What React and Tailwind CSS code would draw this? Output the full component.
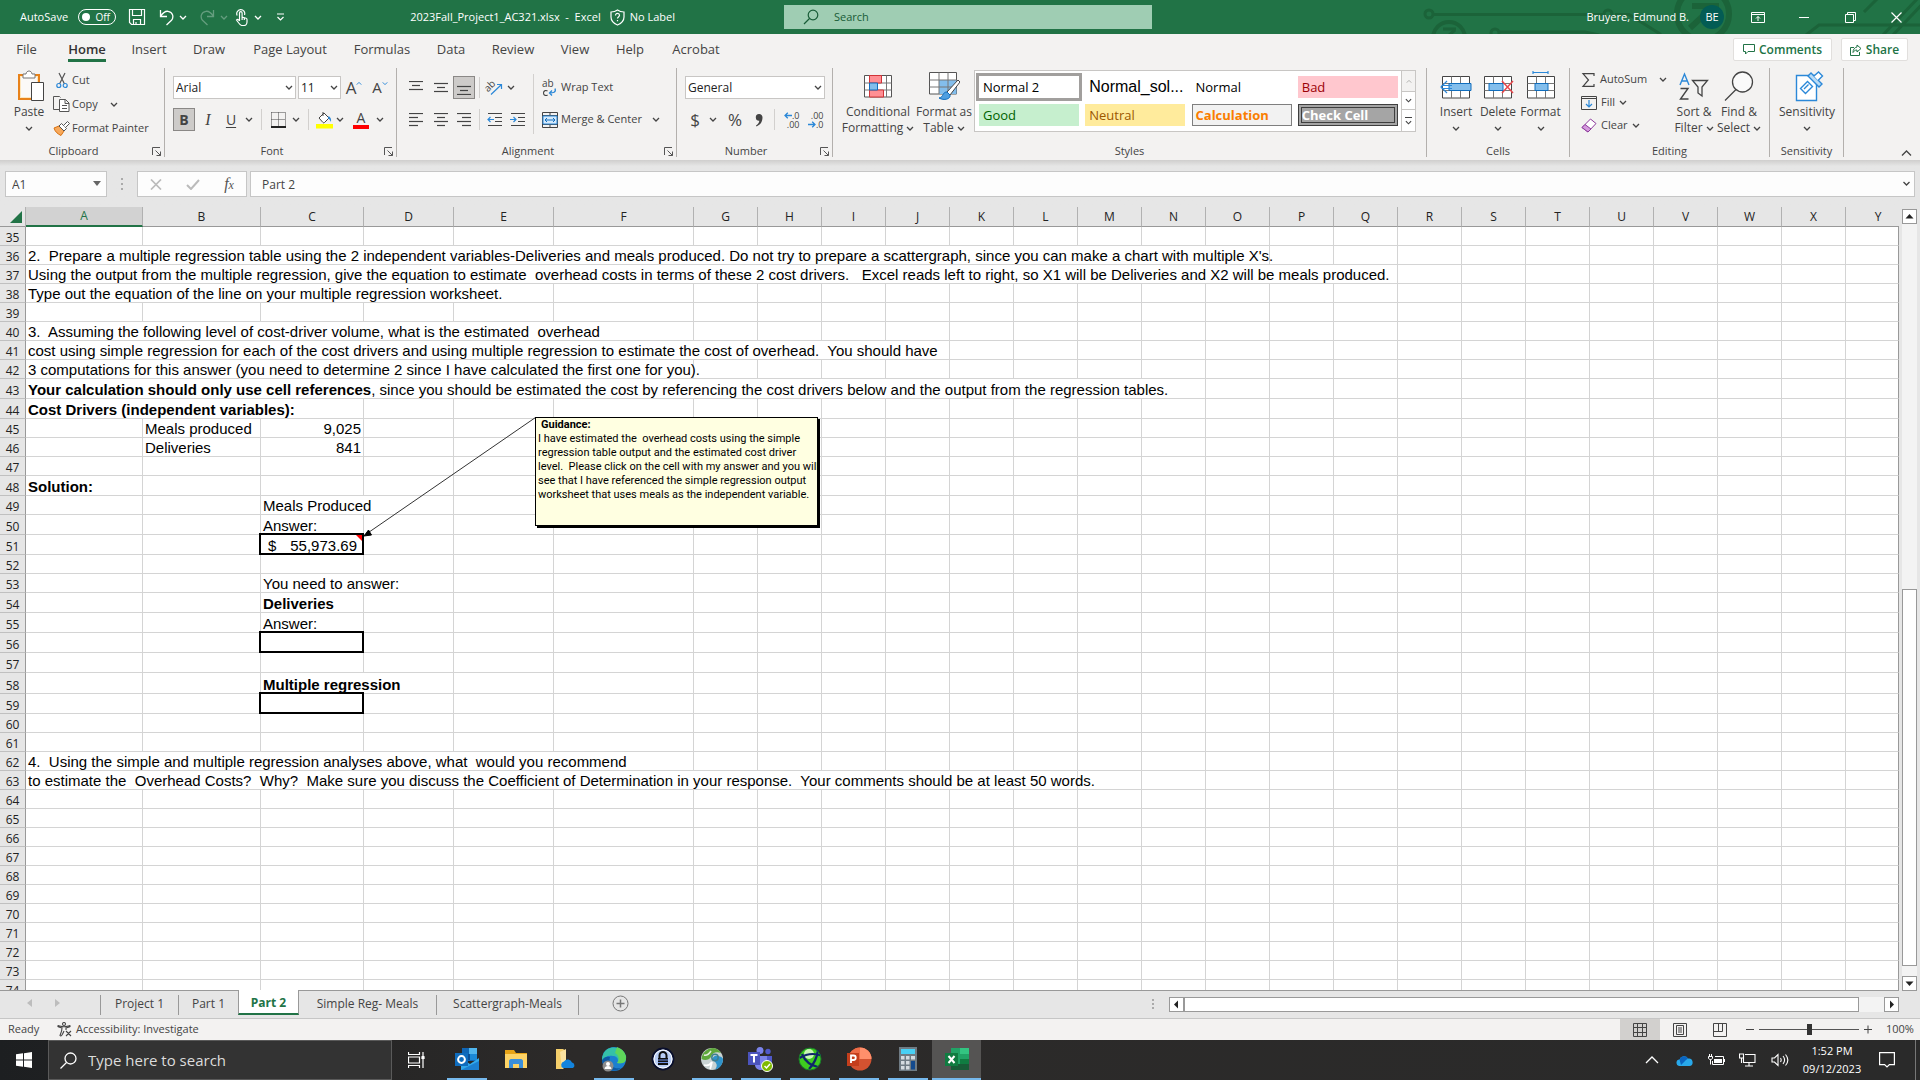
import React from "react";

const UI = "font-['Open_Sans','Noto_Sans',sans-serif]";
const SHEET = "font-['Liberation_Sans',Arial,sans-serif]";

/* ---------- small shared pieces ---------- */

function Caret({ className = "text-[#444]", w = 8 }) {
  return (
    <svg width={w} height="5" viewBox="0 0 8 5" fill="none" className={className}>
      <path d="M1 1l3 3 3-3" stroke="currentColor" strokeWidth="1.3" />
    </svg>
  );
}

function Btn({ label, className = "", children }) {
  return (
    <button
      type="button"
      aria-label={label}
      className={"flex h-[23px] shrink-0 items-center justify-center whitespace-nowrap " + className}
    >
      {children}
    </button>
  );
}

function Sep({ className = "w-[9px]" }) {
  return (
    <span className={"flex h-[21px] shrink-0 justify-center " + className}>
      <span className="w-px bg-[#d2d0ce]" />
    </span>
  );
}

function Launcher() {
  return (
    <svg width="10" height="10" viewBox="0 0 10 10" fill="none" stroke="#555" strokeWidth="1">
      <path d="M.5 8V.5H8M3.500 3.500l5 5M8.500 4.500v4h-4" />
    </svg>
  );
}

function Group({ name, width, launcher, children }) {
  return (
    <section aria-label={name} className={"flex h-[89px] shrink-0 flex-col border-r border-[#b3b0ad] " + width}>
      <div className="flex h-[77px] w-full shrink-0">{children}</div>
      <div className={"relative flex h-[12px] shrink-0 items-center justify-center text-[11px] leading-[16px] text-[#444] " + (launcher ? "pr-[17px]" : "")}>
        <span>{name}</span>
        {launcher && (
          <button type="button" aria-label={name + " settings"} className="absolute right-[2px] top-[2px]">
            <Launcher />
          </button>
        )}
      </div>
    </section>
  );
}

function BigButton({ icon, lines, caretBelow, className }) {
  return (
    <button type="button" className={"flex shrink-0 flex-col items-center text-[12px] leading-[16px] text-[#444] " + className}>
      <span className="flex h-[36px] items-center justify-center">{icon}</span>
      {lines.map((l, i) => (
        <span key={l} className="flex items-center gap-[3px] whitespace-nowrap">
          {l}
          {!caretBelow && i === lines.length - 1 && <Caret />}
        </span>
      ))}
      {caretBelow && (
        <span className="flex h-[16px] items-center">
          <Caret />
        </span>
      )}
    </button>
  );
}

function Combo({ label, value, className }) {
  return (
    <span className={"relative block h-[23px] shrink-0 " + className}>
      <select
        aria-label={label}
        defaultValue={value}
        className="h-full w-full appearance-none border border-[#c8c6c4] bg-white px-[2px] text-[12px] text-[#222] outline-none"
      >
        <option>{value}</option>
      </select>
      <span className="pointer-events-none absolute right-[3px] top-[9px]">
        <Caret />
      </span>
    </span>
  );
}

/* ---------- title bar ---------- */

function TitleBar() {
  return (
    <header className="relative flex h-[34px] shrink-0 items-center bg-[#217346] text-[11px] text-white">
      <svg className="absolute right-0 top-0" width="500" height="34" viewBox="1420 0 500 34" fill="none" stroke="#1b6339" strokeWidth="3">
        <circle cx="1429" cy="14" r="4" />
        <path d="M1434 14.500h170M1615 14.500h14l32 20M1500 32h85l14 3" />
        <circle cx="1608" cy="14" r="4" />
        <circle cx="1449" cy="38" r="16" strokeWidth="4" />
        <path d="M1441 42l14-12M1443 29h13" />
        <circle cx="1495" cy="33" r="4" />
        <circle cx="1703" cy="14" r="26" strokeWidth="6" />
        <path d="M1690 28l24-22M1692 6h24v18" strokeWidth="6" />
        <path d="M1806 35l13-10h101M1882 36l36-38M1892 36l36-38M1864 12l14-14" />
      </svg>
      <div className="relative flex w-[300px] shrink-0 items-center pl-[20px]">
        <label className="flex items-center">
          <span className="w-[58px]">AutoSave</span>
          <span className="relative h-[16px] w-[38px]">
            <input type="checkbox" role="switch" className="absolute inset-0 h-full w-full appearance-none rounded-full border border-white" />
            <span className="pointer-events-none absolute left-[4px] top-[4px] h-[8px] w-[8px] rounded-full bg-white" />
            <span className="pointer-events-none absolute right-[6px] top-0 text-[10px] leading-[16px]">Off</span>
          </span>
        </label>
        <button type="button" aria-label="Save" className="ml-[12px] w-[18px]">
          <svg width="18" height="18" viewBox="0 0 18 18" fill="none" stroke="white" strokeWidth="1.200">
            <path d="M1.500 1.500h15v15h-13l-2-2zM4.500 1.500v6h9v-6M5.500 16.500v-5h7v5M8 16v-2" />
          </svg>
        </button>
        <button type="button" aria-label="Undo" className="ml-[13px] w-[15px]">
          <svg width="15" height="17" viewBox="0 0 15 17" fill="none" stroke="white" strokeWidth="1.300">
            <path d="M1.500 1v6.500H8M1.500 7.500C4 3.500 6 2 9 2.300c5 .6 6 6 3.500 9L7.500 16" />
          </svg>
        </button>
        <Caret className="ml-[5px] text-white" />
        <button type="button" aria-label="Redo" className="ml-[13px] w-[15px] opacity-30">
          <svg width="15" height="17" viewBox="0 0 15 17" fill="none" stroke="white" strokeWidth="1.300">
            <path d="M13.500 1v6.500H7M13.500 7.500C11 3.500 9 2 6 2.300c-5 .6-6 6-3.500 9L7.500 16" />
          </svg>
        </button>
        <Caret className="ml-[5px] text-white opacity-30" />
        <button type="button" aria-label="Touch mode" className="ml-[7px] w-[13px]">
          <svg width="13" height="18" viewBox="0 0 13 18" fill="none" stroke="white" strokeWidth="1.200">
            <path d="M4.500 13V5a1.300 1.300 0 0 1 2.600 0v4l4 1.200c.6.200.900.7.900 1.300V14c0 2-1.500 3.500-3 3.500H7C5 17.500 3 14 1.500 12c.8-1 2-.6 3 1M2.200 7.500A4 4 0 1 1 9.500 7M7.100 9v3M9.300 9.800V12" />
          </svg>
        </button>
        <Caret className="ml-[6px] text-white" />
        <button type="button" aria-label="Customize quick access" className="ml-[14px]">
          <svg width="9" height="8" viewBox="0 0 9 8" fill="none" stroke="white" strokeWidth="1.200">
            <path d="M1 1h7M1.500 4l3 3 3-3" />
          </svg>
        </button>
      </div>
      <div className="relative flex w-[484px] shrink-0 items-center justify-end pr-[109px]">
        <span className="whitespace-pre">2023Fall_Project1_AC321.xlsx  -  Excel</span>
        <svg className="ml-[9px]" width="15" height="17" viewBox="0 0 15 17" fill="none" stroke="white" strokeWidth="1.200">
          <path d="M7.500 1c2 1.500 4 2 6.500 2v5c0 4-3 6.500-6.500 8C4 14.500 1 12 1 8V3c2.500 0 4.500-.5 6.500-2z" />
          <path d="M5.500 6.500c0-3 4-2.500 4-.2 0 1.700-2 1.600-2 3.200M7.500 11v1.200" />
        </svg>
        <span className="ml-[5px]">No Label</span>
      </div>
      <label className="relative flex h-[24px] w-[368px] shrink-0 items-center bg-[#9fcdb3] text-[#185c37]">
        <svg className="ml-[19px]" width="16" height="16" viewBox="0 0 16 16" fill="none" stroke="#185c37" strokeWidth="1.200">
          <circle cx="10" cy="6" r="4.800" />
          <path d="M6.500 9.500L1 15" />
        </svg>
        <input aria-label="Search" placeholder="Search" className="ml-[15px] w-[280px] bg-transparent text-[11px] outline-none placeholder:text-[#185c37]" />
      </label>
      <div className="relative ml-auto flex shrink-0 items-center">
        <span>Bruyere, Edmund B.</span>
        <span className="ml-[11px] flex h-[24px] w-[24px] items-center justify-center rounded-full bg-[#035c54] text-[11px]">BE</span>
        <button type="button" aria-label="Ribbon display options" className="ml-[27px]">
          <svg width="14" height="11" viewBox="0 0 14 11" fill="none" stroke="white">
            <path d="M.5.500h13v10H.5zM.5 2.500h13M7 9V4.500M5 6.500l2-2 2 2" />
          </svg>
        </button>
        <button type="button" aria-label="Minimize" className="ml-[34px] h-[10px] w-[10px]">
          <span className="block h-px w-full bg-white" />
        </button>
        <button type="button" aria-label="Restore" className="ml-[36px]">
          <svg width="11" height="11" viewBox="0 0 11 11" fill="none" stroke="white">
            <path d="M.5 2.500h8v8h-8zM2.500 2.500v-2h8v8h-2" />
          </svg>
        </button>
        <button type="button" aria-label="Close" className="ml-[35px] mr-[18px]">
          <svg width="11" height="11" viewBox="0 0 11 11" fill="none" stroke="white" strokeWidth="1.200">
            <path d="M.5.500l10 10M10.500.500l-10 10" />
          </svg>
        </button>
      </div>
    </header>
  );
}

/* ---------- ribbon tabs ---------- */

const TABS = [
  ["File", "w-[53px]"],
  ["Home", "w-[68px]"],
  ["Insert", "w-[56px]"],
  ["Draw", "w-[64px]"],
  ["Page Layout", "w-[98px]"],
  ["Formulas", "w-[86px]"],
  ["Data", "w-[52px]"],
  ["Review", "w-[72px]"],
  ["View", "w-[52px]"],
  ["Help", "w-[58px]"],
  ["Acrobat", "w-[74px]"],
];

function RibbonTabs() {
  return (
    <div className="flex h-[34px] shrink-0 bg-[#f3f2f1] text-[13px] text-[#444]">
      <nav className="flex">
        {TABS.map(([t, w]) => (
          <button
            key={t}
            type="button"
            className={"flex items-start justify-center whitespace-nowrap pt-[6px] leading-[19px] " + w + (t === "Home" ? " font-semibold text-[#333]" : "")}
          >
            <span className={t === "Home" ? "border-b-[3px] border-[#217346]" : ""}>{t}</span>
          </button>
        ))}
      </nav>
      <div className="ml-auto mr-[12px] flex gap-[9px] pt-[4px] font-semibold text-[#217346]">
        <button type="button" className="flex h-[23px] w-[99px] items-center justify-center gap-[4px] rounded-[2px] border border-[#e1dfdd] bg-white text-[12px]">
          <svg width="12" height="11" viewBox="0 0 12 11" fill="none" stroke="#217346">
            <path d="M.5.500h11v7H5L2.500 10V7.500h-2z" />
          </svg>
          Comments
        </button>
        <button type="button" className="flex h-[23px] w-[67px] items-center justify-center gap-[4px] rounded-[2px] border border-[#e1dfdd] bg-white text-[12px]">
          <svg width="12" height="12" viewBox="0 0 12 12" fill="none" stroke="#217346">
            <path d="M4 3.500H.5v8h9V8M7 1l4 3.500L7 8V6C5 6 4 7 3 8.500 3 5.500 4.500 3.500 7 3z" />
          </svg>
          Share
        </button>
      </div>
    </div>
  );
}

/* ---------- ribbon icons ---------- */

const PasteIcon = () => (
  <svg width="28" height="32" viewBox="0 0 28 32" fill="none">
    <path d="M2 5h20v24H2z" fill="#fde6bd" stroke="#e8821a" strokeWidth="2" />
    <path d="M4 7h16v20H4z" fill="#fbf9f7" />
    <path d="M6 8V4h3c.5-4 5.500-4 6 0h3v4z" fill="#fff" stroke="#777" />
    <path d="M14.500 12.500h12v18h-12z" fill="#fff" stroke="#444" />
  </svg>
);
const CutIcon = () => (
  <svg width="12" height="17" viewBox="0 0 12 17" fill="none">
    <path d="M3 1l5.500 11M9 1L3.500 12" stroke="#555" strokeWidth="1.200" />
    <circle cx="2.800" cy="13.500" r="2" stroke="#2b88d8" strokeWidth="1.200" />
    <circle cx="9.200" cy="13.500" r="2" stroke="#2b88d8" strokeWidth="1.200" />
  </svg>
);
const CopyIcon = () => (
  <svg width="17" height="16" viewBox="0 0 17 16" fill="none" stroke="#555">
    <path d="M6 13.500H.500v-13h6l1 1" />
    <path d="M6.500 3.500h6l3.500 3.500v8.500H6.500zM12 3.500V7.500h4M9 9.500h5M9 12.500h5" fill="#fff" />
  </svg>
);
const PainterIcon = () => (
  <svg width="17" height="15" viewBox="0 0 17 15" fill="none">
    <path d="M1 7l5-2 5 5-3 4.500C5 13 2 11 1 7z" fill="#f7a95c" stroke="#d8700f" />
    <path d="M6 5l2.500-2.500 5 5L11 10z" fill="#fff" stroke="#555" />
    <path d="M10.500 4.500l4-4 2 2-4 4" fill="#fff" stroke="#555" />
  </svg>
);
const Lines = ({ rows, top = 2 }) => (
  <svg width="14" height="14" viewBox="0 0 14 14" stroke="#444" strokeWidth="1.200">
    {rows.map(([a, b], i) => (
      <path key={i} d={`M${a} ${top + i * 4}.5H${b}`} />
    ))}
  </svg>
);
const BorderIcon = () => (
  <svg width="15" height="16" viewBox="0 0 15 16" fill="none" stroke="#444">
    <path d="M.5.500h14M.5.500v14M14.500.500v14M7.500.500v14M.5 7.500h14" strokeDasharray="1 1" />
    <path d="M0 15h15" strokeWidth="2" stroke="#222" />
  </svg>
);
const FillIcon = () => (
  <svg width="17" height="18" viewBox="0 0 17 18" fill="none">
    <path d="M3 7l5-5 5 5-4.500 4.500a1 1 0 0 1-1.500 0z" stroke="#444" fill="#fff" />
    <path d="M7 5V1" stroke="#444" />
    <path d="M12.500 5c2 1 3 3 2.500 6-1-2-1.500-3-3-3.500z" fill="#2b88d8" />
    <path d="M0 13h17v4.500H0z" fill="#ffff00" />
  </svg>
);
const OrientIcon = () => (
  <svg className="overflow-visible" width="17" height="17" viewBox="0 0 17 17" fill="none">
    <text x="0" y="11" fontSize="10" fill="#444" transform="rotate(-45 4 10)">ab</text>
    <path d="M5 15.500L15 6M11 5.500h4.500V10" stroke="#2b88d8" strokeWidth="1.200" />
  </svg>
);
const IndentIcon = ({ right }) => (
  <svg width="15" height="14" viewBox="0 0 15 14" fill="none">
    <path d="M1 .500h14M8 4.500h7M8 8.500h7M1 12.500h14" stroke="#444" strokeWidth="1.200" />
    <path d={right ? "M0 6.500h6M3.500 4l2.500 2.500L3.500 9" : "M7 6.500H1M3.500 4L1 6.500 3.500 9"} stroke="#2b88d8" strokeWidth="1.200" />
  </svg>
);
const WrapIcon = () => (
  <svg className="overflow-visible" width="15" height="18" viewBox="0 0 15 18" fill="none">
    <text fill="#444" fontSize="10" x="0" y="8">ab</text>
    <path d="M5.500 12.200c-1-1.200-4-1-4 1.800s3 3 4 1.800" stroke="#444" strokeWidth="1.100" />
    <path d="M13 9.500c1.500 4-2 4.500-5.500 4.500M10 11.500L7.500 14l2.500 2.500" stroke="#2b88d8" strokeWidth="1.300" />
  </svg>
);
const MergeIcon = () => (
  <svg width="16" height="16" viewBox="0 0 16 16" fill="none">
    <path d="M.5.500h15v15H.5zM8 .500v3M8 12.500v3M.5 12.500h15M.5 3.500h15" stroke="#444" />
    <path d="M1 4h14v8H1z" fill="#d6eafb" stroke="#2b88d8" />
    <path d="M3 8h10M5 6L3 8l2 2M11 6l2 2-2 2" stroke="#106ebe" />
  </svg>
);
const DecimalIcon = ({ less }) => (
  <span className="flex h-[18px] w-[17px] flex-col text-right text-[9px] leading-[9px] text-[#444]">
    <span className="flex items-center justify-end">
      {!less && (
        <svg width="8" height="7" viewBox="0 0 8 7" fill="none" stroke="#2b88d8" strokeWidth="1.300"><path d="M8 3.500H1M3.800.700L1 3.500l2.800 2.800" /></svg>
      )}
      {less ? ".00" : ".0"}
    </span>
    <span className="flex items-center justify-end">
      {less && (
        <svg width="8" height="7" viewBox="0 0 8 7" fill="none" stroke="#2b88d8" strokeWidth="1.300"><path d="M0 3.500h7M4.200.700L7 3.500 4.200 6.300" /></svg>
      )}
      {less ? ".0" : ".00"}
    </span>
  </span>
);
const CondIcon = () => (
  <svg width="28" height="23" viewBox="0 0 28 23" fill="none">
    <path d="M.5.500h27v21.500H.5z" fill="#fff" stroke="#555" />
    <path d="M5.500.500V22M22.500.500V22M.5 8h27M.5 15h27" stroke="#777" />
    <path d="M5.500.500h12V8h-12zM5.500 15h14v7h-14z" fill="#ff8f94" stroke="#d13438" />
    <path d="M5.500 8h8v7h-8z" fill="#83beec" stroke="#106ebe" />
  </svg>
);
const TableIcon = () => (
  <svg width="31" height="28" viewBox="0 0 31 28" fill="none">
    <path d="M.5.500h27v21.500H.5z" fill="#fff" stroke="#555" />
    <path d="M10 8h17.500v14H10z" fill="#83beec" />
    <path d="M10 .500V22M19 .500V22M.5 8h27M.5 15h27" stroke="#777" />
    <path d="M29 8L18 20l3 3L31 10z" fill="#fff" stroke="#444" />
    <path d="M18 20c-5 0-3 5-8 6 5 3 12 1 11-3z" fill="#4f9fe0" stroke="#106ebe" />
  </svg>
);
const CellIcon = ({ kind }) => (
  <svg width="34" height="30" viewBox="0 0 34 30" fill="none">
    <path d="M3.500 5.500h27v21.500h-27z" fill="#fff" stroke="#444" />
    <path d="M12.500 5.500V27M21.500 5.500V27M3.500 12.500h27M3.500 19.500h27" stroke="#777" />
    {kind === "insert" && (
      <>
        <path d="M10 12.500h22v7H10z" fill="#83beec" stroke="#106ebe" />
        <path d="M8 10l-6 6 6 6M2.500 14.500H13M2.500 17.500H13" stroke="#2b88d8" strokeWidth="1.200" />
      </>
    )}
    {kind === "delete" && (
      <>
        <path d="M8 12.500h14v7H8z" fill="#83beec" stroke="#106ebe" />
        <path d="M21 10l11 12M32 10L21 22" stroke="#e8474c" strokeWidth="1.500" />
      </>
    )}
    {kind === "format" && (
      <>
        <path d="M11 12.500h13v7H11z" fill="#83beec" stroke="#106ebe" />
        <path d="M9 1.500h15M9 0v3M24 0v3" stroke="#2b88d8" strokeWidth="1.200" />
      </>
    )}
  </svg>
);
const SortIcon = () => (
  <svg width="30" height="28" viewBox="0 0 30 28" fill="none">
    <path d="M1 13L5.500 2l4.500 11M2.500 9h6" stroke="#2b88d8" strokeWidth="1.400" />
    <path d="M1.500 16.500H9L1.500 27H9.500" stroke="#444" strokeWidth="1.400" />
    <path d="M13.500 8.500h15l-5.500 6.500v9l-4-3v-6z" stroke="#444" strokeWidth="1.300" />
  </svg>
);
const FindIcon = () => (
  <svg width="30" height="30" viewBox="0 0 30 30" fill="none" stroke="#444" strokeWidth="1.300">
    <circle cx="18.500" cy="11" r="10" fill="#fafafa" />
    <path d="M12 18.500L1 29.500" />
  </svg>
);
const SensIcon = () => (
  <svg width="30" height="31" viewBox="0 0 30 31" fill="none" stroke="#2b88d8" strokeWidth="1.400">
    <path d="M1.500 4.500h20v25h-20z" fill="#fff" />
    <path d="M5.500 17.500l7-7 5 5-7 7zM9 18l4.500-4.500" fill="#fff" />
    <path d="M13 5l3-3 11 11-3 3z" fill="#b9dbf5" />
    <path d="M19 5l4.500-4 4 4-4.500 4.500" fill="#fff" />
  </svg>
);

/* ---------- ribbon ---------- */

function StyleCell({ className, children }) {
  return (
    <button type="button" className={"h-[22px] w-[100px] overflow-hidden whitespace-nowrap pl-[4px] text-left text-[13px] leading-[20px] " + className}>
      {children}
    </button>
  );
}

function Ribbon() {
  return (
    <div className="flex h-[92px] shrink-0 bg-[#f3f2f1] text-[12px] text-[#444]">
      <Group name="Clipboard" width="w-[165px]" launcher>
        <BigButton className="ml-[9px] w-[40px]" icon={<span className="pl-[4px]"><PasteIcon /></span>} lines={["Paste"]} caretBelow />
        <div className="ml-[4px] flex flex-col text-[11px]">
          <Btn className="h-[24px] justify-start! gap-[2px]">
            <span className="flex w-[17px] justify-center"><CutIcon /></span>Cut
          </Btn>
          <div className="flex">
            <Btn className="h-[24px] justify-start! gap-[2px]">
              <CopyIcon />Copy
            </Btn>
            <Btn label="Copy options" className="ml-[6px] h-[24px] w-[20px]"><Caret /></Btn>
          </div>
          <Btn className="h-[24px] justify-start! gap-[2px]">
            <PainterIcon />Format Painter
          </Btn>
        </div>
      </Group>

      <Group name="Font" width="w-[232px]" launcher>
        <div className="flex flex-col pl-[8px]">
          <div className="flex h-[31px] items-center pt-[8px]">
            <Combo label="Font" value="Arial" className="w-[123px]" />
            <Combo label="Font size" value="11" className="ml-[2px] w-[43px]" />
            <Btn label="Increase font size" className="w-[26px] text-[17px]">A<Caret className="mb-[8px] rotate-180 text-[#2b88d8]" w={6} /></Btn>
            <Btn label="Decrease font size" className="w-[26px] text-[15px]">A<Caret className="mb-[8px] text-[#2b88d8]" w={6} /></Btn>
          </div>
          <div className="mt-[9px] flex h-[23px] items-center">
            <Btn label="Bold" className="w-[22px] border border-[#8a8886] bg-[#cdcbc9] text-[14px] font-bold">B</Btn>
            <Btn label="Italic" className="w-[26px] font-['Liberation_Serif',serif] text-[16px] italic">I</Btn>
            <Btn label="Underline" className="w-[20px] text-[14px] underline underline-offset-2">U</Btn>
            <Btn label="Underline options" className="w-[16px]"><Caret /></Btn>
            <Sep />
            <Btn label="Borders" className="w-[24px]"><BorderIcon /></Btn>
            <Btn label="Border options" className="w-[12px]"><Caret /></Btn>
            <Sep className="w-[12px]" />
            <Btn label="Fill color" className="w-[20px]"><FillIcon /></Btn>
            <Btn label="Fill options" className="w-[12px]"><Caret /></Btn>
            <Btn label="Font color" className="w-[30px] flex-col text-[14px] leading-[14px]">
              A<span className="h-[4px] w-[16px] bg-[#f00]" />
            </Btn>
            <Btn label="Font color options" className="w-[8px]"><Caret /></Btn>
          </div>
        </div>
      </Group>

      <Group name="Alignment" width="w-[280px]" launcher>
        <div className="flex w-[136px] flex-col pl-[6px]">
          <div className="flex h-[31px] items-center pt-[8px]">
            <Btn label="Top align" className="w-[25px]"><Lines rows={[[0, 14], [3, 11], [0, 14]]} top={0} /></Btn>
            <Btn label="Middle align" className="w-[25px]"><Lines rows={[[0, 14], [3, 11], [0, 14]]} /></Btn>
            <Btn label="Bottom align" className="w-[22px] border border-[#8a8886] bg-[#cdcbc9]"><Lines rows={[[0, 14], [3, 11], [0, 14]]} top={5} /></Btn>
            <Sep />
            <Btn label="Orientation" className="w-[20px]"><OrientIcon /></Btn>
            <Btn label="Orientation options" className="w-[14px]"><Caret /></Btn>
          </div>
          <div className="mt-[9px] flex h-[23px] items-center">
            <Btn label="Align left" className="w-[25px]"><Lines rows={[[0, 14], [0, 9], [0, 14], [0, 9]]} top={0} /></Btn>
            <Btn label="Center" className="w-[25px]"><Lines rows={[[0, 14], [3, 11], [0, 14], [3, 11]]} top={0} /></Btn>
            <Btn label="Align right" className="w-[22px]"><Lines rows={[[0, 14], [5, 14], [0, 14], [5, 14]]} top={0} /></Btn>
            <Sep />
            <Btn label="Decrease indent" className="w-[20px]"><IndentIcon /></Btn>
            <Btn label="Increase indent" className="w-[26px]"><IndentIcon right /></Btn>
          </div>
        </div>
        <span className="mt-[6px] h-[60px] w-px bg-[#d2d0ce]" />
        <div className="flex flex-col pl-[8px]">
          <div className="flex h-[31px] items-center pt-[8px]">
            <Btn className="gap-[4px] text-[11px]"><WrapIcon />Wrap Text</Btn>
          </div>
          <div className="mt-[9px] flex h-[23px] items-center">
            <Btn className="gap-[3px] text-[11px]"><MergeIcon />Merge &amp; Center</Btn>
            <Btn label="Merge options" className="ml-[6px] w-[16px]"><Caret /></Btn>
          </div>
        </div>
      </Group>

      <Group name="Number" width="w-[156px]" launcher>
        <div className="flex flex-col pl-[8px]">
          <div className="flex h-[31px] items-center pt-[8px]">
            <Combo label="Number format" value="General" className="w-[140px]" />
          </div>
          <div className="mt-[9px] flex h-[23px] items-center">
            <Btn label="Currency" className="w-[20px] text-[17px]">$</Btn>
            <Btn label="Currency options" className="w-[16px]"><Caret /></Btn>
            <Btn label="Percent" className="w-[28px] text-[17px]">%</Btn>
            <Btn label="Comma style" className="w-[20px]">
              <svg width="8" height="14" viewBox="0 0 8 14" fill="#444">
                <path d="M4 1a3.300 3.300 0 0 1 3.500 3.500C7.500 9 5 12 1.500 13.500l-.5-1C3 11 4.300 9.500 4.300 7.700A3.300 3.300 0 1 1 4 1z" />
              </svg>
            </Btn>
            <Sep className="w-[10px]" />
            <Btn label="Increase decimal" className="w-[24px]"><DecimalIcon /></Btn>
            <Btn label="Decrease decimal" className="w-[24px]"><DecimalIcon less /></Btn>
          </div>
        </div>
      </Group>

      <Group name="Styles" width="w-[594px]">
        <BigButton className="ml-[8px] w-[74px]" icon={<CondIcon />} lines={["Conditional", "Formatting"]} />
        <BigButton className="w-[58px]" icon={<TableIcon />} lines={["Format as", "Table"]} />
        <div className="ml-px mt-[2px] flex h-[62px] w-[442px] border border-[#c8c6c4] bg-white">
          <div className="grid w-[426px] grid-cols-4 content-start gap-x-[6px] gap-y-[6px] pl-[4px] pr-[3px] pt-[5px]">
            <StyleCell className="text-black outline-3 outline-[#a19f9d]">Normal 2</StyleCell>
            <StyleCell className={"text-[16px]! text-black " + SHEET}>Normal_sol...</StyleCell>
            <StyleCell className="text-black">Normal</StyleCell>
            <StyleCell className="bg-[#ffc7ce] text-[#9c0006]">Bad</StyleCell>
            <StyleCell className="bg-[#c6efce] text-[#006100]">Good</StyleCell>
            <StyleCell className="bg-[#ffeb9c] text-[#9c5700]">Neutral</StyleCell>
            <StyleCell className="border border-[#7f7f7f] bg-[#f2f2f2] pl-[3px]! leading-[18px]! font-bold text-[#fa7d00]">Calculation</StyleCell>
            <StyleCell className="border-4 border-double border-[#3f3f3f] bg-[#a5a5a5] pl-0! font-bold leading-[13px]! text-white">Check Cell</StyleCell>
          </div>
          <div className="flex w-[14px] flex-col border-l border-[#c8c6c4] bg-[#f3f2f1]">
            <button type="button" aria-label="Previous styles" className="flex h-[20px] items-center justify-center"><Caret className="rotate-180 text-[#b0aeac]" w={6} /></button>
            <button type="button" aria-label="Next styles" className="flex h-[19px] items-center justify-center border-y border-[#c8c6c4] bg-white"><Caret w={7} /></button>
            <button type="button" aria-label="More styles" className="flex h-[21px] flex-col items-center justify-center gap-[2px] bg-white">
              <span className="h-px w-[7px] bg-[#444]" /><Caret w={7} />
            </button>
          </div>
        </div>
      </Group>

      <Group name="Cells" width="w-[143px]">
        <BigButton className="ml-[8px] w-[42px]" icon={<CellIcon kind="insert" />} lines={["Insert"]} caretBelow />
        <BigButton className="w-[42px]" icon={<CellIcon kind="delete" />} lines={["Delete"]} caretBelow />
        <BigButton className="w-[43px]" icon={<CellIcon kind="format" />} lines={["Format"]} caretBelow />
      </Group>

      <Group name="Editing" width="w-[200px]">
        <div className="ml-[11px] flex w-[92px] flex-col text-[11px]">
          <div className="flex items-center">
            <Btn className="gap-[4px]">
              <svg width="15" height="14" viewBox="0 0 15 14" fill="none" stroke="#444" strokeWidth="1.200">
                <path d="M13 3V.600H2L7.500 7 2 13.400h11V11" />
              </svg>
              AutoSum
            </Btn>
            <Btn label="AutoSum options" className="ml-[8px] w-[16px]"><Caret /></Btn>
          </div>
          <Btn className="w-max gap-[4px]">
            <svg width="16" height="14" viewBox="0 0 16 14" fill="none">
              <path d="M.5.500h15v13H.5zM.5 2.500h15" stroke="#444" />
              <path d="M8 4v7M5 8l3 3 3-3" stroke="#2b88d8" strokeWidth="1.200" />
            </svg>
            Fill <Caret />
          </Btn>
          <Btn className="w-max gap-[4px]">
            <svg width="16" height="15" viewBox="0 0 16 15" fill="none">
              <path d="M1 9.500L9.500 1l5.500 4.500L7 14z" fill="#fff" stroke="#8d3a9c" />
              <path d="M1 9.500l3-3L10 11l-3 3z" fill="#d59ade" stroke="#8d3a9c" />
            </svg>
            Clear <Caret />
          </Btn>
        </div>
        <BigButton className="w-[42px]" icon={<SortIcon />} lines={["Sort &", "Filter"]} />
        <BigButton className="ml-px w-[46px]" icon={<FindIcon />} lines={["Find &", "Select"]} />
      </Group>

      <Group name="Sensitivity" width="w-[74px]">
        <BigButton className="ml-[2px] w-[70px]" icon={<span className="pl-[5px]"><SensIcon /></span>} lines={["Sensitivity"]} caretBelow />
      </Group>
      <button type="button" aria-label="Collapse ribbon" className="ml-auto mr-[8px] mt-[82px] h-[6px]">
        <svg width="11" height="6" viewBox="0 0 11 6" fill="none" stroke="#444" strokeWidth="1.300">
          <path d="M1 5.500l4.500-4.500L10 5.500" />
        </svg>
      </button>
    </div>
  );
}

/* ---------- formula bar ---------- */

function FormulaBar() {
  return (
    <div className="flex h-[47px] shrink-0 items-start bg-linear-to-b from-[#cfcecd] from-0% to-[#e6e6e6] to-[13%] pl-[5px] pr-[5px] pt-[11px] text-[12px] text-[#444]">
      <label className="relative block h-[26px] w-[102px] shrink-0">
        <input aria-label="Name box" defaultValue="A1" className="h-full w-full border border-[#c6c6c6] bg-[#fdfdfd] px-[6px] text-[12px] outline-none" />
        <svg className="pointer-events-none absolute right-[6px] top-[10px]" width="8" height="5" viewBox="0 0 8 5" fill="#666">
          <path d="M0 0h8L4 5z" />
        </svg>
      </label>
      <span className="flex h-[26px] w-[30px] shrink-0 flex-col items-center justify-center gap-[3px]">
        <i className="h-[2px] w-[2px] bg-[#aaa]" /><i className="h-[2px] w-[2px] bg-[#aaa]" /><i className="h-[2px] w-[2px] bg-[#aaa]" />
      </span>
      <div className="flex h-[26px] w-[110px] shrink-0 items-center justify-around border border-[#c6c6c6] bg-[#fdfdfd]">
        <button type="button" aria-label="Cancel" className="w-[12px]">
          <svg width="12" height="11" viewBox="0 0 12 11" stroke="#bbb" strokeWidth="1.700"><path d="M1 .500l10 10M11 .500l-10 10" /></svg>
        </button>
        <button type="button" aria-label="Enter" className="w-[14px]">
          <svg width="14" height="11" viewBox="0 0 14 11" fill="none" stroke="#bbb" strokeWidth="2"><path d="M1 6l4 4L13 1" /></svg>
        </button>
        <button type="button" aria-label="Insert function" className="font-['Liberation_Serif',serif] text-[16px] italic leading-[16px] text-[#555]">
          f<span className="text-[12px]">x</span>
        </button>
      </div>
      <label className="relative ml-[3px] block h-[26px] flex-1">
        <input aria-label="Formula" defaultValue="Part 2" className="h-full w-full border border-[#c6c6c6] bg-[#fdfdfd] pl-[11px] text-[12px] outline-none" />
        <span className="absolute right-[4px] top-[10px]"><Caret w={9} /></span>
      </label>
    </div>
  );
}

/* ---------- worksheet ---------- */

const COLS = [
  ["A", "w-[117px]"], ["B", "w-[118px]"], ["C", "w-[103px]"], ["D", "w-[90px]"], ["E", "w-[100px]"], ["F", "w-[140px]"],
  ...["G", "H", "I", "J", "K", "L", "M", "N", "O", "P", "Q", "R", "S", "T", "U", "V", "W", "X"].map((c) => [c, "w-[64px]"]),
  ["Y", ""],
];

const TALL = { 43: 20, 44: 20, 48: 20, 50: 20, 51: 20, 54: 20, 55: 20, 56: 20, 57: 20, 58: 21, 59: 20 };

/* row number -> cells keyed by column index: text, column span, look */
const CELLS = {
  36: { 0: { t: "2.  Prepare a multiple regression table using the 2 independent variables-Deliveries and meals produced. Do not try to prepare a scattergraph, since you can make a chart with multiple X's.", span: 15 } },
  37: { 0: { t: "Using the output from the multiple regression, give the equation to estimate  overhead costs in terms of these 2 cost drivers.   Excel reads left to right, so X1 will be Deliveries and X2 will be meals produced.", span: 17 } },
  38: { 0: { t: "Type out the equation of the line on your multiple regression worksheet.", span: 5 } },
  40: { 0: { t: "3.  Assuming the following level of cost-driver volume, what is the estimated  overhead", span: 6 } },
  41: { 0: { t: "cost using simple regression for each of the cost drivers and using multiple regression to estimate the cost of overhead.  You should have", span: 10 } },
  42: { 0: { t: "3 computations for this answer (you need to determine 2 since I have calculated the first one for you).", span: 6 } },
  43: { 0: { t: <><b>Your calculation should only use cell references</b>, since you should be estimated the cost by referencing the cost drivers below and the output from the regression tables.</>, span: 14 } },
  44: { 0: { t: <b>Cost Drivers (independent variables):</b>, span: 3 } },
  45: { 1: { t: "Meals produced" }, 2: { t: "9,025", right: true } },
  46: { 1: { t: "Deliveries" }, 2: { t: "841", right: true } },
  48: { 0: { t: <b>Solution:</b> } },
  49: { 2: { t: "Meals Produced", span: 2 } },
  50: { 2: { t: "Answer:" } },
  51: { 2: { t: <span className="flex justify-between pl-[5px] pr-[6px]"><span>$</span><span>55,973.69</span></span>, box: true, note: true } },
  53: { 2: { t: "You need to answer:", span: 2 } },
  54: { 2: { t: <b>Deliveries</b> } },
  55: { 2: { t: "Answer:" } },
  56: { 2: { t: "", box: true } },
  58: { 2: { t: <b>Multiple regression</b>, span: 2 } },
  59: { 2: { t: "", box: true } },
  62: { 0: { t: "4.  Using the simple and multiple regression analyses above, what  would you recommend", span: 6 } },
  63: { 0: { t: "to estimate the  Overhead Costs?  Why?  Make sure you discuss the Coefficient of Determination in your response.  Your comments should be at least 50 words.", span: 12 } },
};

function Row({ n }) {
  const cells = [];
  const data = CELLS[n] || {};
  for (let c = 0; c < COLS.length; ) {
    const d = data[c] || {};
    const span = d.span || 1;
    cells.push(
      <td
        key={c}
        colSpan={span}
        className={
          "relative whitespace-pre border-b border-r border-b-[#d4d4d4] p-0 align-bottom leading-[16px] " +
          (c + span >= COLS.length ? "border-r-[#999] " : "border-r-[#d4d4d4] ") +
          (d.right ? "pr-[2px] text-right" : "pl-[2px]")
        }
      >
        {d.t}
        {d.box && <span className="pointer-events-none absolute -bottom-px -left-[2px] -right-px -top-[2px] z-10 border-2 border-black" />}
        {d.note && (
          <svg className="absolute right-[1px] top-0" width="6" height="6" viewBox="0 0 6 6" fill="#f00"><path d="M0 0h6v6z" /></svg>
        )}
      </td>
    );
    c += span;
  }
  return (
    <tr style={{ height: TALL[n] || 19 }}>
      <th scope="row" className={"border-b border-r border-b-[#c0c0c0] border-r-[#999] bg-[#e6e6e6] p-0 align-bottom text-[12px] font-normal leading-[15px] text-[#222] " + UI}>{n}</th>
      {cells}
    </tr>
  );
}

function Note() {
  return (
    <>
      <svg className="pointer-events-none absolute left-[362px] top-[209px]" width="174" height="122" viewBox="362 416 174 122" fill="none">
        <path d="M535.500 417.500L367 533.500" stroke="#333" />
        <path d="M364 536l4.500-6 3 5z" fill="#000" stroke="#000" />
      </svg>
      <aside className="absolute left-[535px] top-[210px] h-[109px] w-[283px] whitespace-pre border border-black bg-[#ffffe1] pl-[2px] font-[Roboto,sans-serif] text-[11px] leading-[14px] text-black shadow-[2px_2px_0_#000]">
        <b className="pl-[3px]">Guidance:</b>
        {"\nI have estimated the  overhead costs using the simple\nregression table output and the estimated cost driver\nlevel.  Please click on the cell with my answer and you will\nsee that I have referenced the simple regression output\nworksheet that uses meals as the independent variable."}
      </aside>
    </>
  );
}

function Arrow({ d }) {
  return (
    <svg width="9" height="9" viewBox="0 0 9 9" fill="#222">
      <path d={d} />
    </svg>
  );
}

function Worksheet() {
  const rows = Array.from({ length: 40 }, (_, i) => 35 + i);
  return (
    <main className="flex min-h-0 flex-1 bg-[#e6e6e6]">
      <div className="relative min-w-0 flex-1 overflow-hidden border-b border-[#999]">
        <table className={"w-full table-fixed border-separate border-spacing-0 bg-white text-[15px] text-black " + SHEET}>
          <colgroup>
            <col className="w-[26px]" />
            {COLS.map(([c, w]) => <col key={c} className={w} />)}
          </colgroup>
          <thead>
            <tr className="h-[20px]">
              <th aria-label="Select all" className="border-b border-r border-b-[#999] border-r-[#b1b1b1] bg-[#e6e6e6] p-0">
                <svg className="ml-[10px]" width="12" height="12" viewBox="0 0 12 12" fill="#217346"><path d="M12 0v12H0z" /></svg>
              </th>
              {COLS.map(([c]) => (
                <th
                  key={c}
                  scope="col"
                  className={
                    "text-[12px] font-normal leading-[18px] " + UI +
                    (c === "A"
                      ? " border-b-2 border-r border-b-[#217346] border-r-[#b1b1b1] bg-[#d2d2d2] p-0 text-[#217346]"
                      : " border-b border-b-[#999] bg-[#e6e6e6] text-[#222]" + (c === "Y" ? " py-0 pl-[11px] pr-0" : " border-r border-r-[#b1b1b1] p-0"))
                  }
                >
                  {c}
                </th>
              ))}
            </tr>
          </thead>
          <tbody>{rows.map((n) => <Row key={n} n={n} />)}</tbody>
        </table>
        <Note />
      </div>
      <div className="flex w-[21px] shrink-0 flex-col items-center pt-[2px]">
        <button type="button" aria-label="Scroll up" className="flex h-[15px] w-[15px] shrink-0 items-center justify-center border border-[#999] bg-white"><Arrow d="M.5 6.500L4.500 2l4 4.500z" /></button>
        <div className="flex w-[15px] flex-1 flex-col bg-[#f3f3f3] pb-[10px]">
          <div className="flex-1" />
          <div className="h-[377px] border border-[#999] bg-white" />
        </div>
        <button type="button" aria-label="Scroll down" className="flex h-[15px] w-[15px] shrink-0 items-center justify-center border border-[#999] bg-white"><Arrow d="M.5 2.500h8L4.500 7z" /></button>
      </div>
    </main>
  );
}

/* ---------- sheet tabs and status bar ---------- */

function SheetTabs() {
  const tab = "flex h-[28px] items-center justify-center pb-[2px] whitespace-nowrap ";
  const bar = <span className="mt-[4px] h-[20px] w-px shrink-0 bg-[#999]" />;
  return (
    <div className="flex h-[28px] shrink-0 items-start border-b border-[#c6c6c6] bg-[#e6e6e6] text-[12px] text-[#444]">
      <div className="flex h-[24px] w-[100px] items-center gap-[23px] pl-[27px]">
        <button type="button" aria-label="Previous sheet"><svg className="block" width="5" height="8" viewBox="0 0 5 8" fill="#bdbdbd"><path d="M5 0v8L0 4z" /></svg></button>
        <button type="button" aria-label="Next sheet"><svg className="block" width="5" height="8" viewBox="0 0 5 8" fill="#bdbdbd"><path d="M0 0v8l5-4z" /></svg></button>
      </div>
      {bar}
      <button type="button" className={tab + "w-[77px]"}>Project 1</button>
      {bar}
      <button type="button" className={tab + "w-[59px]"}>Part 1</button>
      <button type="button" className="relative -mt-px flex h-[25px] w-[61px] items-center justify-center border-x border-b-2 border-x-[#999] border-b-[#217346] bg-white pt-[2px] font-bold text-[#217346]">Part 2</button>
      <button type="button" className={tab + "w-[137px]"}>Simple Reg- Meals</button>
      {bar}
      <button type="button" className={tab + "w-[141px]"}>Scattergraph-Meals</button>
      {bar}
      <button type="button" aria-label="New sheet" className="ml-[33px] mt-[4px]">
        <svg className="block" width="17" height="17" viewBox="0 0 17 17" fill="none" stroke="#777"><circle cx="8.500" cy="8.500" r="7.500" /><path d="M8.500 4.500v8M4.500 8.500h8" strokeWidth="1.500" /></svg>
      </button>
      <span className="ml-auto mr-[15px] flex h-[28px] flex-col items-center justify-center gap-[2px] pb-[2px]">
        <i className="h-[2px] w-[2px] bg-[#aaa]" /><i className="h-[2px] w-[2px] bg-[#aaa]" /><i className="h-[2px] w-[2px] bg-[#aaa]" />
      </span>
      <div className="mr-[21px] mt-[6px] flex h-[15px] w-[730px] bg-[#f3f3f3]">
        <button type="button" aria-label="Scroll left" className="flex w-[15px] items-center justify-center border border-[#999] bg-white"><Arrow d="M6 .500v8L2 4.500z" /></button>
        <div className="w-[675px] border border-[#999] bg-white" />
        <div className="flex-1" />
        <button type="button" aria-label="Scroll right" className="flex w-[15px] items-center justify-center border border-[#999] bg-white"><Arrow d="M3 .500v8l4-4z" /></button>
      </div>
    </div>
  );
}

function StatusBar() {
  return (
    <div className="flex h-[21px] shrink-0 items-center bg-[#f3f2f1] text-[11px] text-[#444]">
      <span className="ml-[8px] w-[49px]">Ready</span>
      <button type="button" className="flex items-center gap-[4px]">
        <svg width="15" height="15" viewBox="0 0 15 15" fill="none" stroke="#444" strokeWidth="1.100">
          <circle cx="7" cy="2" r="1.500" />
          <path d="M1 3.500c-.5 1 0 1.500 4 2.500 0 3-1 5-2 7.500 1 1.500 2 0 4-4.500M13 3.500c.5 1 0 1.500-4 2.500v2M1 3.500c2 .5 4 1.300 6 1.300s4-.8 6-1.300M9 9l5 5M14 9l-5 5" />
        </svg>
        Accessibility: Investigate
      </button>
      <div className="ml-auto flex h-full items-center">
        <button type="button" aria-label="Normal view" className="flex h-full w-[40px] items-center justify-center bg-[#d2d0ce]">
          <svg width="14" height="14" viewBox="0 0 14 14" fill="none" stroke="#444"><path d="M.5.500h13v13H.5zM4.500.500v13M9.500.500v13M.5 4.500h13M.5 9.500h13" /></svg>
        </button>
        <button type="button" aria-label="Page layout view" className="flex h-full w-[40px] items-center justify-center">
          <svg width="14" height="14" viewBox="0 0 14 14" fill="none" stroke="#444"><path d="M.5.500h13v13H.5zM3.500 2.500h7v9h-7zM5 5h4M5 7h4M5 9h4" /></svg>
        </button>
        <button type="button" aria-label="Page break view" className="flex h-full w-[40px] items-center justify-center">
          <svg width="14" height="14" viewBox="0 0 14 14" fill="none" stroke="#444"><path d="M.5.500h13v13H.5zM.5 8.500h9v-8M5.500.500v8" /></svg>
        </button>
        <button type="button" aria-label="Zoom out" className="ml-[6px]">
          <svg width="8" height="9" viewBox="0 0 8 9" stroke="#444"><path d="M0 4.500h8" /></svg>
        </button>
        <input
          type="range"
          aria-label="Zoom"
          min="0"
          max="100"
          defaultValue="50"
          className="ml-[5px] h-[12px] w-[100px] appearance-none bg-[linear-gradient(#555,#555)] bg-[length:100%_1px] bg-center bg-no-repeat [&::-webkit-slider-thumb]:h-[11px] [&::-webkit-slider-thumb]:w-[5px] [&::-webkit-slider-thumb]:appearance-none [&::-webkit-slider-thumb]:bg-[#333]"
        />
        <button type="button" aria-label="Zoom in" className="ml-[5px]">
          <svg width="8" height="9" viewBox="0 0 8 9" stroke="#444"><path d="M0 4.500h8M4 .500v8" /></svg>
        </button>
        <span className="ml-[14px] w-[34px]">100%</span>
      </div>
    </div>
  );
}

/* ---------- taskbar ---------- */

const OutlookIcon = () => (
  <svg width="26" height="26" viewBox="0 0 26 26">
    <path d="M8 2h15v13H8z" fill="#1066b5" /><path d="M15 2h8v6h-8z" fill="#50b6ee" /><path d="M8 8h8v6H8z" fill="#0a4f96" /><path d="M16 8h7v6h-7z" fill="#1b8ad8" />
    <path d="M7 12l9 6 9-6v12H7z" fill="#32a8ea" /><path d="M7 24l18-9v9z" fill="#1b7fd0" />
    <path d="M1 7h13v13H1z" fill="#0f6cbd" /><circle cx="7.500" cy="13.500" r="3.400" fill="none" stroke="#fff" strokeWidth="2" />
  </svg>
);
const ExplorerIcon = () => (
  <svg width="24" height="22" viewBox="0 0 24 22">
    <path d="M1 2h9l2 3h11v6H1z" fill="#e8a417" /><path d="M1 6h22v14H1z" fill="#fdd366" /><path d="M5 20v-7c0-1 1-2 2-2h10c1 0 2 1 2 2v7h-4v-4H9v4z" fill="#3a8fdb" />
  </svg>
);
const FolderCloudIcon = () => (
  <svg width="22" height="24" viewBox="0 0 22 24">
    <path d="M2 2h7l3 2v15l-3 3H2z" fill="#f5cf6b" /><path d="M6 5l6-3v16l-4 4z" fill="#fbe3a0" /><path d="M9 21a3.500 3.500 0 0 1 1-6.500 4.500 4.500 0 0 1 8 1 3 3 0 0 1 1 5.500z" fill="#1384dd" />
  </svg>
);
const EdgeIcon = () => (
  <svg width="26" height="26" viewBox="0 0 26 26">
    <circle cx="13" cy="13" r="12" fill="#1b7fd0" /><path d="M2 9C5-1 21-1 25 10c1 6-4 8-9 7 2-2 1-7-4-7-5-1-9 1-11 5 0-2 0-4 1-6z" fill="#35c1a8" /><path d="M16 1c6 2 9 7 9 11 0 5-4 6-9 5 3-3 2-8-2-10z" fill="#5fd65a" />
    <path d="M9 11c-2 6 3 13 11 11-8 6-19 1-19-8 2-3 5-4 8-3z" fill="#0c59a4" /><circle cx="7" cy="20" r="5.500" fill="#8c8c8c" /><circle cx="7" cy="18" r="2" fill="#fff" /><path d="M3.500 23c0-4 7-4 7 0z" fill="#fff" />
  </svg>
);
const LockIcon = () => (
  <svg width="24" height="24" viewBox="0 0 24 24">
    <circle cx="12" cy="12" r="10.500" fill="#b8cdf5" stroke="#0a0f2c" strokeWidth="1.800" /><circle cx="12" cy="12" r="9" fill="none" stroke="#fff" />
    <path d="M8.500 11V8.500a3.500 3.500 0 0 1 7 0V11" fill="none" stroke="#111" strokeWidth="2" /><path d="M7 11h10v7H7z" fill="#111" /><path d="M7 13h10M7 15.500h10" stroke="#6c8de0" />
  </svg>
);
const GlobeIcon = () => (
  <svg width="24" height="24" viewBox="0 0 24 24">
    <circle cx="12" cy="12" r="11" fill="#c9d3d3" /><path d="M1.500 12C2 5 8 1 13 1c4 .5 6 2 8 5-5-2-9 0-10 4-2 3-6 4-9.500 2z" fill="#5fa83c" /><path d="M4 8c3 1 5-1 7-4" stroke="#e6efe0" strokeWidth="1.500" fill="none" />
    <path d="M13 13c-1-3 2-5 5-4 3 .5 5 2 5 3 0 6-4 10-8 10.500C18 19 17 16 13 13z" fill="#2f93cb" /><circle cx="15" cy="10.500" r="3.200" fill="none" stroke="#3f7f8f" strokeWidth="1.500" /><path d="M4 18c3 1 6 0 8-3-1 3-1 5-2 7" fill="none" stroke="#fff" strokeWidth="1.800" />
  </svg>
);
const TeamsIcon = () => (
  <svg width="27" height="26" viewBox="0 0 27 26">
    <circle cx="13" cy="4.500" r="3.500" fill="#7b83eb" /><circle cx="21" cy="5.500" r="2.700" fill="#5059c9" /><path d="M17 10h8v7c0 3-3 5-6 4z" fill="#5059c9" /><path d="M8 10h12v9c0 3-3 5-6 5s-6-2-6-5z" fill="#7b83eb" />
    <path d="M1 6h12v13H1z" fill="#4b53bc" /><path d="M3.500 9h7M7 9v7.500" stroke="#fff" strokeWidth="2" /><circle cx="20" cy="20" r="5.500" fill="#7fba00" stroke="#fff" /><path d="M17.500 20l2 2 3.500-4" fill="none" stroke="#fff" strokeWidth="1.500" />
  </svg>
);
const GreenGlobeIcon = () => (
  <svg width="26" height="26" viewBox="0 0 26 26" fill="none">
    <circle cx="13" cy="13" r="11" fill="#3ecb1f" /><circle cx="12" cy="8" r="5" fill="#c9f5b5" />
    <path d="M2.500 12C9 8 17 7 24 9.500M5 8c3 7 8 11.500 16 13M21 4c-1 8-4 14-9 19" stroke="#10246b" strokeWidth="2.200" />
    <circle cx="13" cy="13" r="11" stroke="#1a7a2a" />
  </svg>
);
const OfficeIcon = ({ kind }) => (
  <svg width="26" height="26" viewBox="0 0 26 26">
    {kind === "ppt" ? (
      <>
        <circle cx="14" cy="13" r="11.500" fill="#d35230" /><path d="M14 1.500A11.500 11.500 0 0 1 25.500 13H14z" fill="#ff8f6b" /><path d="M2.500 13A11.500 11.500 0 0 1 14 1.500V13z" fill="#ed6c47" /><path d="M1 7h12v13H1z" fill="#c43e1c" />
        <path d="M5 17V9.500h2.500a2.200 2.200 0 0 1 0 4.500H5" fill="none" stroke="#fff" strokeWidth="1.800" />
      </>
    ) : (
      <>
        <path d="M7 2h18v22H7z" fill="#21a366" /><path d="M16 2h9v6h-9z" fill="#33c481" /><path d="M16 13h9v5h-9z" fill="#107c41" /><path d="M7 18h18v6H7z" fill="#185c37" /><path d="M1 7h13v13H1z" fill="#107c41" />
        <path d="M4.500 10l6 7M10.500 10l-6 7" stroke="#fff" strokeWidth="2" />
      </>
    )}
  </svg>
);
const CalcIcon = () => (
  <svg width="20" height="26" viewBox="0 0 20 26">
    <path d="M1 1h18v24H1z" fill="#6f7b84" /><path d="M3 3h14v5H3z" fill="#48d0f5" />
    <path d="M3 10h3.500v3.500H3zM8 10h3.500v3.500H8zM13 10h4v3.500h-4zM3 15h3.500v3.500H3zM8 15h3.500v3.500H8zM3 20h3.500v3.500H3zM8 20h3.500v3.500H8z" fill="#d5dbe0" /><path d="M13 15h4v8.500h-4z" fill="#134a8e" />
  </svg>
);

const APPS = [
  ["Outlook", <OutlookIcon />, true],
  ["File Explorer", <ExplorerIcon />, false],
  ["OneDrive folder", <FolderCloudIcon />, false],
  ["Edge", <EdgeIcon />, true],
  ["Lock", <LockIcon />, false],
  ["Connection client", <GlobeIcon />, true],
  ["Teams", <TeamsIcon />, true],
  ["Globe", <GreenGlobeIcon />, true],
  ["PowerPoint", <OfficeIcon kind="ppt" />, true],
  ["Calculator", <CalcIcon />, true],
  ["Excel", <OfficeIcon kind="excel" />, true],
];

function Taskbar() {
  return (
    <footer className="flex h-[40px] shrink-0 items-stretch bg-linear-to-r from-[#1d1f21] via-[#2c2a29] via-30% to-[#2a2a2a] text-white">
      <button type="button" aria-label="Start" className="flex w-[48px] items-center justify-center">
        <svg width="16" height="16" viewBox="0 0 16 16" fill="#fff"><path d="M0 2.300l7-1v6.200H0zM8 1.200L16 0v7.500H8zM0 8.500h7v6.200l-7-1zM8 8.500h8V16l-8-1.200z" /></svg>
      </button>
      <label className="flex w-[344px] items-center border border-[#5a5a5a] bg-[#333]">
        <svg className="ml-[11px]" width="17" height="17" viewBox="0 0 17 17" fill="none" stroke="#fff" strokeWidth="1.300"><circle cx="10.500" cy="6.500" r="5.500" /><path d="M6.500 10.500L.5 16.500" /></svg>
        <input aria-label="Taskbar search" placeholder="Type here to search" className="ml-[11px] w-[260px] bg-transparent text-[15px] outline-none placeholder:text-[#dcdcdc]" />
      </label>
      <button type="button" aria-label="Task view" className="flex w-[49px] items-center justify-center">
        <svg width="17" height="16" viewBox="0 0 17 16" fill="none" stroke="#fff" strokeWidth="1.200"><path d="M.5 0v2.500h11V0M.5 16v-2.500h11V16M.5 5h11v6H.5zM15 0v16M13.500 6h3" /><path d="M13.500 4h3v3h-3z" fill="#fff" stroke="none" /></svg>
      </button>
      <nav className="flex pl-px">
        {APPS.map(([name, icon, open]) => (
          <button
            key={name}
            type="button"
            aria-label={name}
            className={"flex w-[49px] flex-col items-center " + (name === "Excel" ? "bg-[#555453]" : "")}
          >
            <span className="flex h-[38px] items-center">{icon}</span>
            <span className={"h-[2px] " + (open ? "bg-[#76b9ed] " : "") + (name === "Excel" ? "w-full" : "w-[40px]")} />
          </button>
        ))}
      </nav>
      <div className="ml-auto flex items-center">
        <button type="button" aria-label="Hidden icons" className="mr-[17px]"><svg width="14" height="8" viewBox="0 0 14 8" fill="none" stroke="#fff" strokeWidth="1.300"><path d="M1 7l6-6 6 6" /></svg></button>
        <button type="button" aria-label="OneDrive" className="mr-[15px]"><svg width="17" height="11" viewBox="0 0 17 11"><path d="M3 11a3.300 3.300 0 0 1 .5-6.500A4.700 4.700 0 0 1 12 3.500a3.800 3.800 0 0 1 1.500 7.500z" fill="#28a8ea" /><path d="M3.500 4.500A4.700 4.700 0 0 1 12 3.500l-2 1.500-5 5z" fill="#0a64c0" /></svg></button>
        <button type="button" aria-label="Battery" className="mr-[14px]"><svg width="17" height="12" viewBox="0 0 17 12" fill="none" stroke="#fff"><path d="M7 2.500h8.500v8H4.500V7M16.500 5v3M1.500 0v2M3.500 0v2M.5 2.500h4V4c0 2-4 2-4 0zM2.500 5.500v5" /><path d="M6 5h8v4H6z" fill="#fff" stroke="none" /></svg></button>
        <button type="button" aria-label="Network" className="mr-[15px]"><svg width="17" height="14" viewBox="0 0 17 14" fill="none" stroke="#fff" strokeWidth="1.100"><path d="M6 1.500h10v8H4.500V5M10 9.500v3.500M6 13h8M.5 1h4v4h-4zM2.500 5v5" /></svg></button>
        <button type="button" aria-label="Volume" className="mr-[13px]"><svg width="18" height="14" viewBox="0 0 18 14" fill="none" stroke="#fff" strokeWidth="1.100"><path d="M1 5h2.500L7 1.500v11L3.500 9H1zM9.500 5c1 1.500 1 2.500 0 4M12 3c2 2.500 2 5.500 0 8M14.500 1.500c3 3.500 3 7.500 0 11" /></svg></button>
        <div className="w-[60px] text-center text-[11px] leading-[18px]">
          <div>1:52 PM</div>
          <div>09/12/2023</div>
        </div>
        <button type="button" aria-label="Notifications" className="ml-[17px] mr-[20px]"><svg width="16" height="16" viewBox="0 0 16 16" fill="none" stroke="#fff" strokeWidth="1.200"><path d="M.600.600h14.800v12h-5L8 15l-2.400-2.400h-5z" /></svg></button>
        <span className="h-[40px] w-[5px] border-l border-[#777]" />
      </div>
    </footer>
  );
}

export default function App() {
  return (
    <div className={"flex h-screen w-full flex-col overflow-hidden bg-white " + UI}>
      <TitleBar />
      <RibbonTabs />
      <Ribbon />
      <FormulaBar />
      <Worksheet />
      <SheetTabs />
      <StatusBar />
      <Taskbar />
    </div>
  );
}
